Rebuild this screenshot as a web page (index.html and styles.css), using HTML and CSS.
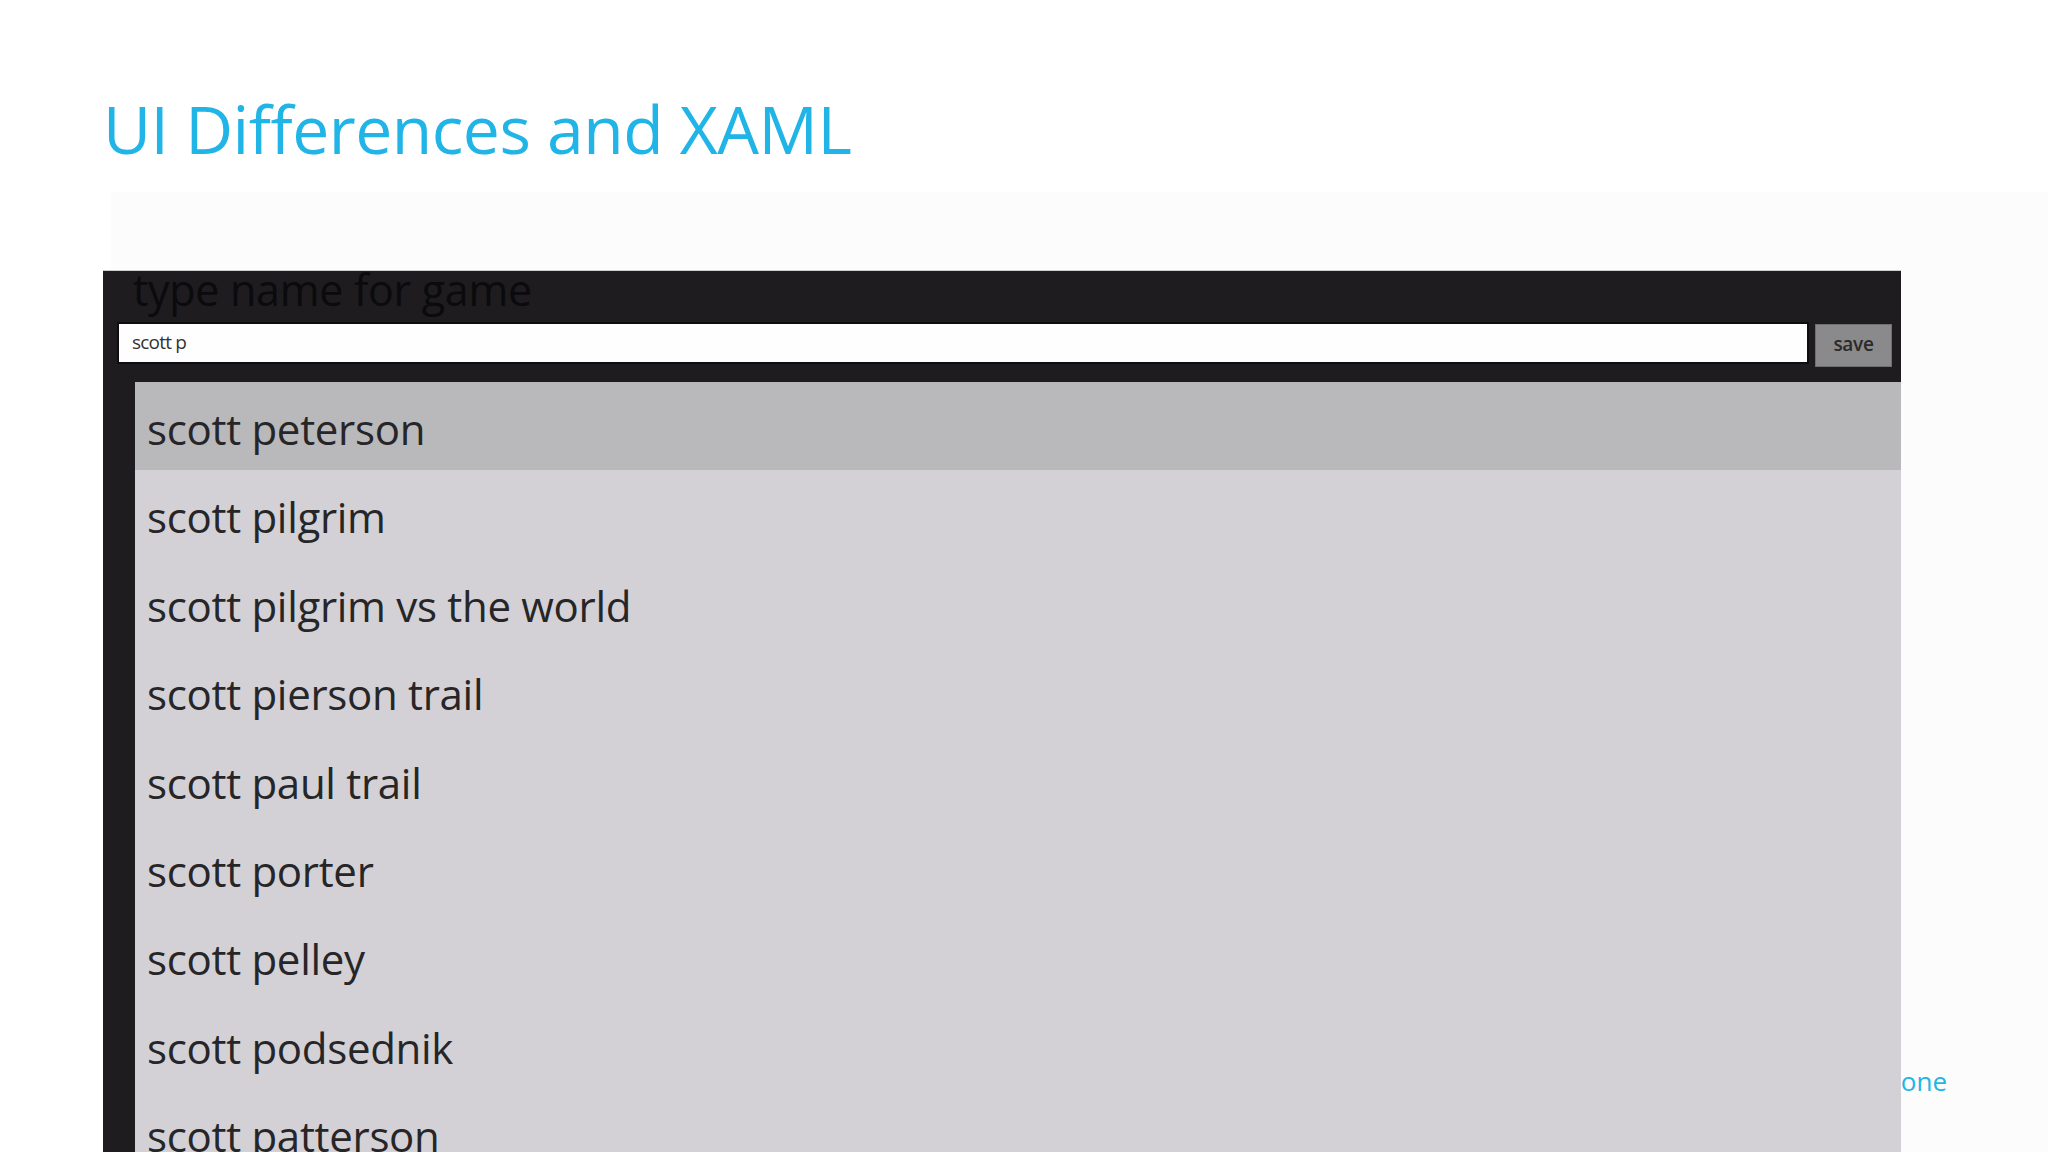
FILE: index.html
```html
<!DOCTYPE html>
<html lang="en">
<head>
<meta charset="utf-8">
<title>UI Differences and XAML</title>
<link rel="stylesheet" href="styles.css">
</head>
<body>
  <header class="slide-head">
    <h1 class="slide-title">UI Differences and XAML</h1>
  </header>

  <main class="stage">
    <section class="app">
      <div class="app-bar">
        <div class="app-prompt">type name for game</div>
        <div class="entry-row">
          <div class="entry">scott p</div>
          <button class="save" type="button">save</button>
        </div>
      </div>
      <div class="app-body">
        <ul class="suggestions">
          <li class="suggestion is-selected">scott peterson</li>
          <li class="suggestion">scott pilgrim</li>
          <li class="suggestion">scott pilgrim vs the world</li>
          <li class="suggestion">scott pierson trail</li>
          <li class="suggestion">scott paul trail</li>
          <li class="suggestion">scott porter</li>
          <li class="suggestion">scott pelley</li>
          <li class="suggestion">scott podsednik</li>
          <li class="suggestion">scott patterson</li>
        </ul>
      </div>
    </section>
  </main>

  <p class="slide-foot">windows phone</p>
</body>
</html>
```

FILE: styles.css
```css
html, body {
  margin: 0;
  padding: 0;
}

body {
  position: relative;
  width: 2048px;
  height: 1152px;
  overflow: hidden;
  background: #ffffff;
  font-family: "Open Sans", "Noto Sans", sans-serif;
}

/* slide heading */
.slide-head {
  height: 192px;
  padding-left: 103px;
  box-sizing: border-box;
  padding-top: 95px;
}

.slide-title {
  margin: 0;
  font-size: 66px;
  line-height: 66px;
  font-weight: 400;
  color: #21b4e7;
  letter-spacing: -0.5px;
}

/* faint content panel */
.stage {
  margin-left: 111px;
  height: 960px;
  padding-top: 78px;
  box-sizing: border-box;
  background: #fcfcfc;
}

.app {
  position: relative;
  z-index: 1;
  margin-left: -8px;
  width: 1798px;
  height: 882px;
  display: flex;
  flex-direction: column;
}

/* dark input bar */
.app-bar {
  flex: 0 0 112px;
  box-sizing: border-box;
  background: #1e1c1f;
  border-top: 1px solid #cfcdd2;
  overflow: hidden;
  display: flex;
  flex-direction: column;
}

.app-prompt {
  margin-top: -2px;
  padding-left: 30px;
  font-size: 43px;
  line-height: 42px;
  color: #0b0a0c;
  letter-spacing: -0.3px;
}

.entry-row {
  margin-top: 11px;
  padding: 0 9px 0 14px;
  display: flex;
  gap: 6px;
}

.entry {
  flex: 1;
  height: 42px;
  box-sizing: border-box;
  background: #fefefe;
  border: 2px solid #0e0d0f;
  padding-left: 13px;
  font-size: 19px;
  line-height: 36px;
  color: #333333;
  letter-spacing: -0.8px;
}

.save {
  width: 77px;
  height: 43px;
  margin-top: 2px;
  box-sizing: border-box;
  background: #8a898c;
  border: 1px solid #6f6e71;
  font-family: "Open Sans", "Noto Sans", sans-serif;
  font-size: 19px;
  font-weight: 600;
  color: #2a292b;
  padding: 0 0 4px;
  letter-spacing: -0.3px;
}

/* suggestion list */
.app-body {
  flex: 1 1 auto;
  min-height: 0;
  overflow: hidden;
  display: flex;
  background: #1e1c1f;
  padding-left: 32px;
}

.suggestions {
  flex: 1;
  margin: 0;
  padding: 0;
  list-style: none;
  background: #d3d1d5;
}

.suggestion {
  height: 88.4px;
  box-sizing: border-box;
  padding: 6px 0 0 12px;
  font-size: 42px;
  line-height: 82.4px;
  color: #262527;
  letter-spacing: -0.3px;
}

.suggestion.is-selected {
  background: #b9b8bb;
}

/* footer caption, partly under the app panel */
.slide-foot {
  position: absolute;
  right: 101px;
  top: 1063px;
  margin: 0;
  font-size: 26px;
  line-height: 36px;
  color: #21b4e7;
  z-index: 0;
}
```
